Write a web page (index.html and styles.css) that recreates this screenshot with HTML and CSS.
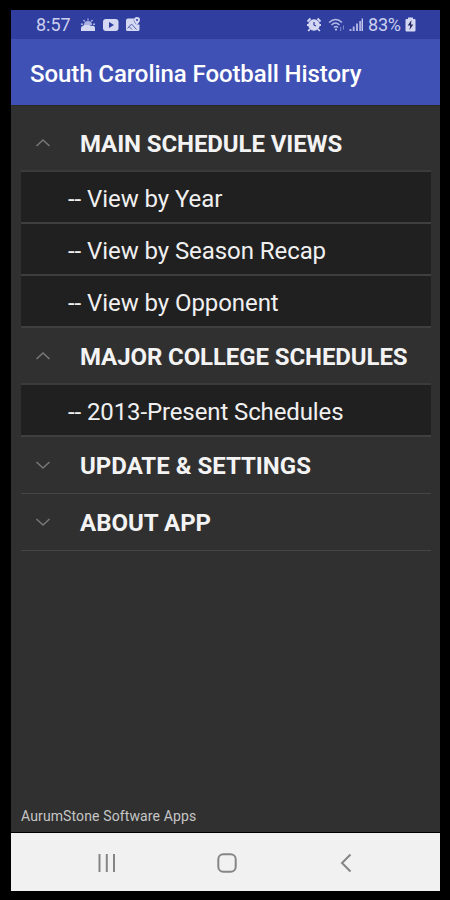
FILE: index.html
```html
<!DOCTYPE html>
<html lang="en">
<head>
<meta charset="utf-8">
<title>South Carolina Football History</title>
<link rel="stylesheet" href="styles.css">
</head>
<body>
<div class="phone">
  <header class="status">
    <span class="clock">8:57</span>
    <svg class="left-icons" width="62" height="18" viewBox="0 0 62 18">
      <path d="M1 15v-3q0-2 2-2 1-2 4-1 2-1 4 1 4-1 4 2v3z" fill="#d5d8f3"/>
      <path d="M4 9a4 4 0 0 1 8 0z" fill="#aab1e2"/>
      <path d="M8 2.500v2M3.500 4l1.300 1.500M12.500 4l-1.300 1.500M1 8l2 .5M15 8l-2 .5" fill="none" stroke="#aab1e2" stroke-width="1.300"/>
      <rect x="23" y="3" width="15.500" height="12" rx="3" fill="#d5d8f3"/>
      <path d="M29 6v6l5-3z" fill="#303f9f"/>
      <path d="M48 2.500h6q-1 4 3 6h2.500V13.500q0 1.500-1.500 1.500h-10.500Q46 15 46 13.500V4.500q0-2 2-2z" fill="#d5d8f3"/>
      <path d="M47.500 12.500l4-4.500 5 5.500M49 10.500l3 3" fill="none" stroke="#5662b0" stroke-width="1"/>
      <path d="M57 9q-3-3-3-5a3 3 0 0 1 6 0q0 2-3 5z" fill="#d5d8f3"/>
      <circle cx="57" cy="4" r="1" fill="#303f9f"/>
    </svg>
    <svg class="right-icons" width="60" height="18" viewBox="0 0 60 18">
      <circle cx="8" cy="9" r="5.800" fill="#d5d8f3"/>
      <path d="M1.500 5.500L4.500 2.500M11.500 2.500l3 3M4 13l-1.800 2M12 13l1.800 2M1 9h2M13 9h2" stroke="#d5d8f3" stroke-width="1.800"/>
      <path d="M8 6V9l2 1" fill="none" stroke="#303f9f" stroke-width="1.200"/>
      <path d="M23 6.500q7-6 13 0M25.500 9q4-4 8 0M28 11.500q2-2 4 0" fill="none" stroke="#b4bae6" stroke-width="1.500"/>
      <circle cx="30" cy="13.500" r="1.100" fill="#c4c9ee"/>
      <path d="M34.700 11v4M37.500 9.500v4" stroke="#7f89cb" stroke-width="1"/>
      <path d="M44.500 13v2M47.700 10.500V15M51 7.500V15M54.200 5V15" stroke="#aab1e2" stroke-width="2"/>
      <path d="M56.300 2.500V15" stroke="#c4c9ee" stroke-width="1.400"/>
    </svg>
    <span class="percent">83%</span>
    <svg class="battery" width="11" height="16" viewBox="0 0 11 16">
      <path d="M3 2V.5h5V2h1.500q1 0 1 1v10.500q0 1-1 1h-8q-1 0-1-1V3q0-1 1-1z" fill="#d5d8f3"/>
      <path d="M6.500 3L2.700 8.500h2.500L4.500 13l3.800-5.500H6z" fill="#25285e"/>
    </svg>
  </header>
  <h1 class="appbar"><span class="t-title">South Carolina Football History</span></h1>
  <main class="content">
    <section>
      <h2 class="group"><svg class="chev" viewBox="0 0 16 10"><path d="M1.500 8L8 2l6.500 6"/></svg><span class="t-main">MAIN SCHEDULE VIEWS</span></h2>
      <div class="child"><span>-- View by Year</span></div>
      <div class="child"><span>-- View by Season Recap</span></div>
      <div class="child"><span>-- View by Opponent</span></div>
    </section>
    <section>
      <h2 class="group"><svg class="chev" viewBox="0 0 16 10"><path d="M1.500 8L8 2l6.500 6"/></svg><span class="t-major">MAJOR COLLEGE SCHEDULES</span></h2>
      <div class="child"><span class="t-present">-- 2013-Present Schedules</span></div>
    </section>
    <h2 class="group closed"><svg class="chev" viewBox="0 0 16 10"><path d="M1.500 2L8 8l6.500-6"/></svg><span>UPDATE &amp; SETTINGS</span></h2>
    <h2 class="group closed"><svg class="chev" viewBox="0 0 16 10"><path d="M1.500 2L8 8l6.500-6"/></svg><span>ABOUT APP</span></h2>
    <footer class="credit">AurumStone Software Apps</footer>
  </main>
  <nav class="nav">
    <svg width="20" height="20" viewBox="0 0 20 20"><path d="M2.500 1v18M9.800 1v18M17 1v18"/></svg>
    <svg width="20" height="20" viewBox="0 0 20 20"><rect x="1.300" y="1.300" width="17.400" height="17.400" rx="5"/></svg>
    <svg width="20" height="20" viewBox="0 0 20 20"><path d="M14.500 1.500L6 10l8.500 8.500"/></svg>
  </nav>
</div>
</body>
</html>
```
FILE: styles.css
```css
* { box-sizing: border-box; }
body {
  margin: 0;
  height: 900px;
  padding: 10px 10px 9px 11px;
  background: #000;
  font-family: Roboto, sans-serif;
  overflow: hidden;
}
.phone {
  height: 881px;
  display: flex;
  flex-direction: column;
}
.status {
  height: 29px;
  background: #303f9f;
  color: #ccd0f0;
  display: flex;
  align-items: center;
  padding: 0 24px 0 25px;
  font-size: 18px;
  white-space: nowrap;
}
.clock { width: 35px; }
.left-icons { margin-left: 8.500px; }
.right-icons { margin-left: auto; }
.percent { margin-left: 2px; width: 34px; letter-spacing: -0.2px; }
.battery { margin-left: 3px; }
.appbar {
  margin: 0;
  height: 66px;
  background: #3f51b5;
  color: #fff;
  display: flex;
  align-items: center;
  padding: 3px 0 0 19px;
  font-size: 24px;
  font-weight: 500;
  letter-spacing: -0.08px;
  white-space: nowrap;
}
.content {
  height: 727px;
  background: #303030;
  border-top: 1px solid #292a25;
  padding: 9px 9px 0 10px;
  display: flex;
  flex-direction: column;
}
.group {
  margin: 0;
  height: 57px;
  display: flex;
  align-items: center;
  padding: 3px 0 0 14px;
  border-bottom: 2px solid #3b3b3b;
  color: #f3f3f3;
  font-size: 24px;
  font-weight: 700;
  white-space: nowrap;
}
.group.closed {
  padding-top: 1px;
  border-bottom: 1px solid #464646;
}
.t-main, .t-major { letter-spacing: -0.1px; }
.chev {
  width: 16px;
  height: 10px;
  margin: -3px 29px 0 0;
  fill: none;
  stroke: #777;
  stroke-width: 1.600;
}
.closed .chev { margin-top: -1px; }
.child {
  height: 52px;
  display: flex;
  align-items: center;
  padding: 4px 0 0 47px;
  background: #202020;
  border-bottom: 2px solid #3f3f3f;
  color: #f0f0f0;
  font-size: 24px;
  letter-spacing: -0.07px;
  white-space: nowrap;
}
.t-present { letter-spacing: -0.11px; }
.credit {
  margin-top: auto;
  padding-bottom: 7px;
  color: #c6c6c6;
  font-size: 14px;
  line-height: 18px;
  letter-spacing: 0.12px;
}
.nav {
  height: 58px;
  margin-top: auto;
  background: #f1f1f1;
  display: flex;
  align-items: center;
  justify-content: space-between;
  padding: 1px 84px 0 86px;
}
.nav svg { fill: none; stroke: #858585; stroke-width: 2; }
```
